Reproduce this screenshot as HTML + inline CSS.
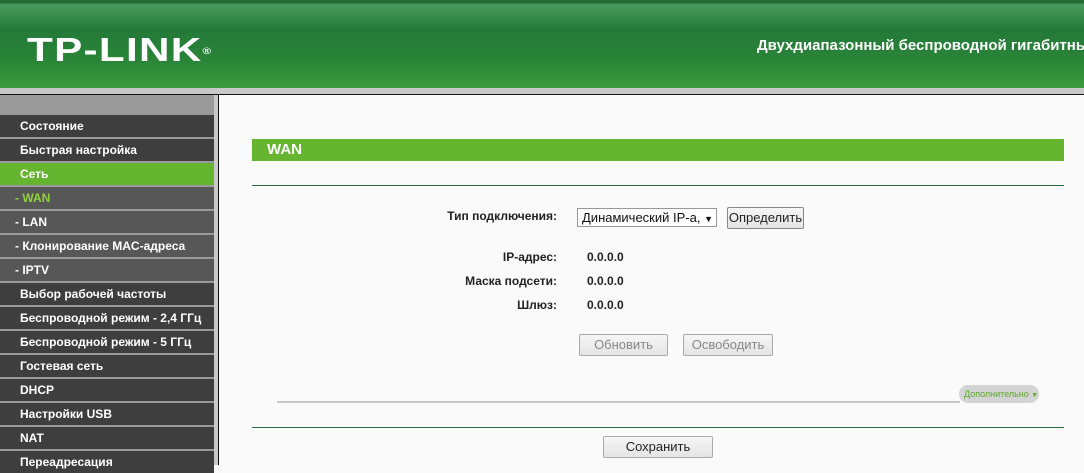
<!DOCTYPE html>
<html><head><meta charset="utf-8"><style>
*{margin:0;padding:0;box-sizing:border-box}
body{width:1084px;height:465px;overflow:hidden;background:#fafafa;font-family:"Liberation Sans",Arial,sans-serif;position:relative}
#hdr{position:absolute;left:0;top:0;width:1084px;height:88px;background:linear-gradient(#1f6b32 0,#1f6b32 3px,#4a9a5e 4px,#237a38 30px,#2a8438 60px,#3a9a3c 88px)}
#logo{position:absolute;left:27px;top:33px;color:#fff;font-weight:bold;font-size:33px;line-height:33px;letter-spacing:1px;transform:scaleX(1.28);transform-origin:left}
#logo sup{font-size:9px;vertical-align:top;position:relative;top:2px}
#title{position:absolute;left:757px;top:37px;color:#fff;font-weight:bold;font-size:15px;white-space:nowrap}
#band{position:absolute;left:0;top:88px;width:1084px;height:6px;background:#c8c8c8}
#bl{position:absolute;left:0;top:94px;width:1084px;height:1px;background:#111}
#side{position:absolute;left:0;top:95px;width:214px;height:370px;background:#9a9a9a}
#col{position:absolute;left:214px;top:95px;width:4px;height:370px;background:#c8c8c8}
#col2{position:absolute;left:218px;top:95px;width:1px;height:370px;background:#111}
.it{position:absolute;left:0;width:214px;height:22px;background:#3e3e3e;color:#fff;font-weight:bold;font-size:12px;line-height:22px;padding-left:20px}
.sub{background:#575757;padding-left:15px}
.act{background:#66b530}
.cur{color:#8fd33a}
.lbl{position:absolute;font-size:12px;font-weight:bold;color:#222;text-align:right;width:160px}
.val{position:absolute;font-size:12px;font-weight:bold;color:#222}
.btn{position:absolute;border:1px solid #aaa;background:linear-gradient(#f6f6f6,#e4e4e4);font-size:13px;text-align:center;color:#222;border-radius:2px}
</style></head><body>
<div id="hdr"><div id="logo">TP-LINK<sup>®</sup></div><div id="title">Двухдиапазонный беспроводной гигабитный</div></div>
<div id="band"></div><div id="bl"></div>
<div id="side">
<div class="it" style="top:20px">Состояние</div>
<div class="it" style="top:44px">Быстрая настройка</div>
<div class="it act" style="top:68px">Сеть</div>
<div class="it sub cur" style="top:92px">- WAN</div>
<div class="it sub" style="top:116px">- LAN</div>
<div class="it sub" style="top:140px">- Клонирование MAC-адреса</div>
<div class="it sub" style="top:164px">- IPTV</div>
<div class="it" style="top:188px">Выбор рабочей частоты</div>
<div class="it" style="top:212px">Беспроводной режим - 2,4 ГГц</div>
<div class="it" style="top:236px">Беспроводной режим - 5 ГГц</div>
<div class="it" style="top:260px">Гостевая сеть</div>
<div class="it" style="top:284px">DHCP</div>
<div class="it" style="top:308px">Настройки USB</div>
<div class="it" style="top:332px">NAT</div>
<div class="it" style="top:356px">Переадресация</div>
</div>
<div id="col"></div><div id="col2"></div>
<div style="position:absolute;left:252px;top:139px;width:812px;height:22px;background:#66b530;color:#fff;font-weight:bold;font-size:15px;line-height:22px;padding-left:15px">WAN</div>
<div style="position:absolute;left:252px;top:185px;width:812px;height:1px;background:#2a6b45"></div>
<div class="lbl" style="left:397px;top:209px">Тип подключения:</div>
<div style="position:absolute;left:577px;top:208px;width:140px;height:19px;border:1px solid #999;background:#fff;font-size:13px;line-height:17px;padding-left:4px;color:#111">Динамический IP-а, <span style="font-size:9px">▼</span></div>
<div class="btn" style="left:727px;top:207px;width:77px;height:22px;line-height:20px;border-color:#888">Определить</div>
<div class="lbl" style="left:397px;top:250px">IP-адрес:</div><div class="val" style="left:587px;top:250px">0.0.0.0</div>
<div class="lbl" style="left:397px;top:274px">Маска подсети:</div><div class="val" style="left:587px;top:274px">0.0.0.0</div>
<div class="lbl" style="left:397px;top:298px">Шлюз:</div><div class="val" style="left:587px;top:298px">0.0.0.0</div>
<div class="btn" style="left:579px;top:334px;width:89px;height:22px;line-height:20px;color:#888">Обновить</div>
<div class="btn" style="left:683px;top:334px;width:90px;height:22px;line-height:20px;color:#888">Освободить</div>
<div style="position:absolute;left:277px;top:401px;width:683px;height:2px;background:#c8c8c8"></div>
<div style="position:absolute;left:959px;top:385px;width:80px;height:18px;border-radius:9px;background:#d4d4d4;color:#5aaa2a;font-size:9px;line-height:18px;padding-left:5px">Дополнительно <span style="font-size:7px">▼</span></div>
<div style="position:absolute;left:252px;top:427px;width:812px;height:1px;background:#2a6b45"></div>
<div class="btn" style="left:603px;top:436px;width:110px;height:22px;line-height:20px">Сохранить</div>
</body></html>
